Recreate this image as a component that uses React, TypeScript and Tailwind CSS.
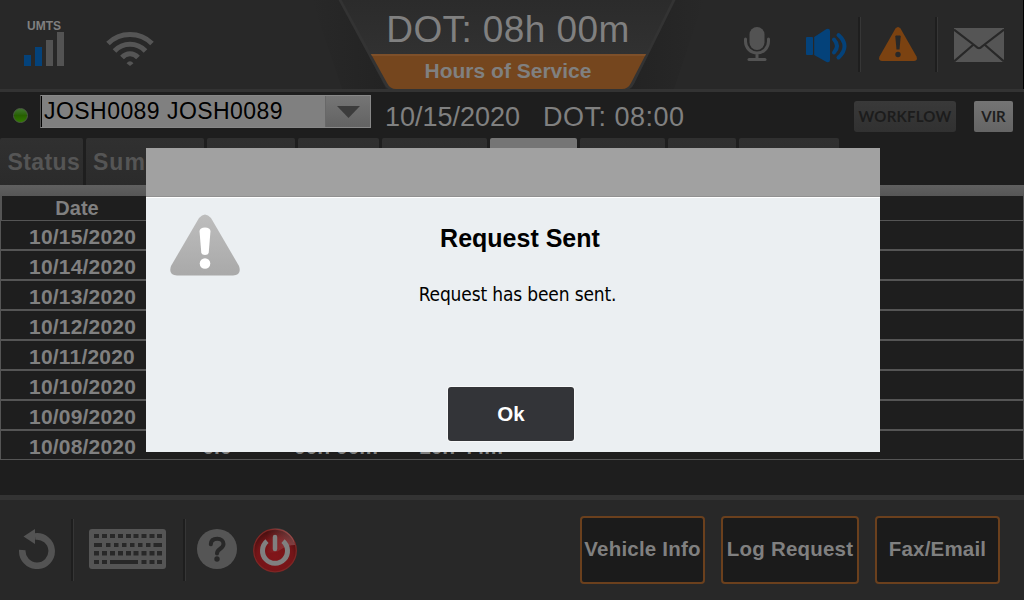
import React from "react";

const dates = [
  "10/15/2020",
  "10/14/2020",
  "10/13/2020",
  "10/12/2020",
  "10/11/2020",
  "10/10/2020",
  "10/09/2020",
  "10/08/2020",
];

function Separator({ className }: { className: string }) {
  return <div className={`w-[3px] shrink-0 border-l-2 border-l-[#1e1e1e] border-r border-r-[#363636] ${className}`} />;
}

function Signal() {
  return (
    <div className="ml-6 mt-[19px] flex h-[48px] w-10 flex-col">
      <span className="-mx-2 text-center text-[12px] font-bold leading-[14px] text-[#808080]">UMTS</span>
      <div className="-mt-px flex h-[34px] items-end gap-1">
        <div className="h-[11px] w-[7px] bg-[#04427a]" />
        <div className="h-[19px] w-[7px] bg-[#04427a]" />
        <div className="h-[26px] w-[7px] bg-[#535353]" />
        <div className="h-[34px] w-[7px] bg-[#535353]" />
      </div>
    </div>
  );
}

function Wifi() {
  return (
    <svg className="ml-[42px] mt-[31px]" width="48" height="36" viewBox="0 0 48 36" fill="none" stroke="#555" strokeWidth="5">
      <path d="M2 12.5C14 .5 34 .5 46 12.5" />
      <path d="M8.5 20C17 11 31 11 39.5 20" />
      <path d="M16 26.5C20.5 21.5 27.5 21.5 32 26.5" />
      <path d="M20.5 32.2Q24 28.5 27.5 32.2L24 35Z" fill="#555" stroke="none" />
    </svg>
  );
}

function Mic() {
  return (
    <svg className="ml-auto mt-[27px]" width="26" height="35" viewBox="0 0 26 35" fill="none" stroke="#535353">
      <rect x="5.5" y="0" width="15" height="23" rx="7.5" fill="#535353" stroke="none" />
      <path d="M1.5 12v2.5a11.5 11.5 0 0 0 23 0V12M13 26v6" strokeWidth="3" strokeLinecap="round" />
      <path d="M5 32.5h16" strokeWidth="3" strokeLinecap="round" />
    </svg>
  );
}

function Speaker() {
  return (
    <svg className="ml-9 mt-[28px]" width="42" height="36" viewBox="0 0 42 36">
      <rect y="9" width="7" height="18" rx="1" fill="#04427a" />
      <path d="M8.2 9L20.5 1Q24 0 24 3v29q0 3-3.500 2L8.200 27z" fill="#04427a" />
      <g fill="none" stroke="#04427a" strokeWidth="4" strokeLinecap="round">
        <path d="M28 11.500Q34 18 28 24.500" />
        <path d="M32.500 7Q44.500 18 32.500 29.500" />
      </g>
    </svg>
  );
}

function Alert() {
  return (
    <svg className="ml-[18px] mt-[27px]" width="38" height="34" viewBox="0 0 38 34">
      <path d="M16.500 1.500Q19-1.500 21.500 1.500L37.500 29.500Q39 34 35 34H3Q-1 34 .5 29.500Z" fill="#7b4211" />
      <path d="M16.300 9.500q0-1 1-1h3.400q1 0 1 1L20.500 22.500h-3z" fill="#282828" />
      <circle cx="19" cy="27.500" r="2.700" fill="#282828" />
    </svg>
  );
}

function Mail() {
  return (
    <svg className="ml-[16px] mr-[19px] mt-[28px]" width="50" height="34" viewBox="0 0 50 34">
      <rect width="50" height="34" fill="#555" />
      <path d="M0 1.500L22 18.500Q25 22 28 18.500L50 1.500M0 33.500L19 17M50 33.500L31 17" fill="none" stroke="#282828" strokeWidth="2.200" />
    </svg>
  );
}

function Header() {
  return (
    <header className="relative h-[92px] border-b-[3px] border-[#333] bg-[#282828]">
      <div className="flex h-[89px] items-start border-r border-black">
        <Signal />
        <Wifi />
        <Mic />
        <Speaker />
        <Separator className="ml-[10px] mt-[17px] h-[55px]" />
        <Alert />
        <Separator className="ml-[18px] mt-[17px] h-[55px]" />
        <Mail />
      </div>
      <div className="absolute left-[312px] top-0 h-[92px] w-[392px]">
        <svg className="absolute inset-0" width="392" height="92" viewBox="0 0 392 92">
          <defs>
            <linearGradient id="hos" x1="0" y1="0" x2="0" y2="1">
              <stop offset="0" stopColor="#2b2b2b" />
              <stop offset="1" stopColor="#313131" />
            </linearGradient>
            <linearGradient id="shadeL">
              <stop offset="0" stopColor="#282828" />
              <stop offset="1" stopColor="#232323" />
            </linearGradient>
            <linearGradient id="shadeR">
              <stop offset="0" stopColor="#232323" />
              <stop offset="1" stopColor="#282828" />
            </linearGradient>
          </defs>
          <path d="M0 0H28L74 89H30z" fill="url(#shadeL)" />
          <path d="M392 0H362L317 89H362z" fill="url(#shadeR)" />
          <path d="M26.500 0L72 84Q75 90 81 90H313Q319 90 322 84L363.500 0z" fill="#333" />
          <path d="M29.500 0L59 54H334L360.500 0z" fill="url(#hos)" />
          <path d="M59 54L75 83Q78 89 84 89H310Q316 89 319 83L334 54z" fill="#75461e" />
          <path d="M59 54H334L333 56H60z" fill="#7e502a" />
        </svg>
        <div className="relative flex flex-col items-center text-[#808080]">
          <div className="h-[54px] pt-[9px] text-[37px] leading-[42px] tracking-[0.4px]">DOT: 08h 00m</div>
          <div className="text-[21px] font-bold leading-[34px]">Hours of Service</div>
        </div>
      </div>
    </header>
  );
}

function DriverBar() {
  return (
    <div className="flex h-[46px] items-start bg-[#1e1e1e]">
      <div className="ml-[13px] mt-4 h-[15px] w-[15px] rounded-full border border-[#4c5c43] bg-linear-to-b from-[#3f752b] via-[#276000] to-[#317900]" />
      <div className="ml-3 mt-[3px] flex h-[33px] w-[331px] border border-[#888] border-l-[#555] bg-[#808080]">
        <span className="w-[284px] border-l border-black pl-[2px] text-[23px] leading-[30px] tracking-[0.45px] text-black">JOSH0089 JOSH0089</span>
        <div className="flex w-[45px] items-center justify-center border-l border-[#686868] bg-linear-to-b from-[#757575] to-[#636363]">
          <svg width="23" height="12" viewBox="0 0 23 12">
            <path d="M0 0H23L11.500 12z" fill="#3c3c3c" />
          </svg>
        </div>
      </div>
      <span className="ml-[14px] mt-[9px] w-[135px] text-[27px] leading-[32px] text-[#808080]">10/15/2020</span>
      <span className="ml-[23px] mt-[9px] text-[27px] leading-[32px] tracking-[0.5px] text-[#808080]">DOT: 08:00</span>
      <div className="ml-auto mt-[9px] flex h-[31px] w-[102px] items-center justify-center rounded-[3px] bg-linear-to-b from-[#393939] to-[#313131] font-[Lato] text-[15px] font-bold tracking-[0.2px] text-[#1c1c1c]">
        WORKFLOW
      </div>
      <div className="ml-[18px] mr-[11px] mt-[9px] flex h-[31px] w-[39px] items-center justify-center rounded-[2px] bg-linear-to-b from-[#747474] to-[#656565] font-[Lato] text-[15px] font-bold text-[#1e1e1e]">
        VIR
      </div>
    </div>
  );
}

function Tabs() {
  const tab = "h-full shrink-0 overflow-hidden rounded-t-[2px] bg-linear-to-b from-[#303030] to-[#2b2b2b]";
  return (
    <nav className="flex h-[47px] gap-[3px] bg-[#1e1e1e] text-[23px] font-bold leading-[49px] tracking-[0.4px] text-[#555]">
      <div className={`${tab} w-[83px] pl-[7.5px]`}>Status</div>
      <div className={`${tab} w-[118px] pl-[7px] tracking-[1px]`}>Summary</div>
      <div className={`${tab} w-[88px]`} />
      <div className={`${tab} w-[81px]`} />
      <div className={`${tab} w-[105px]`} />
      <div className="h-full w-[87px] shrink-0 rounded-t-[2px] bg-[#757575]" />
      <div className={`${tab} w-[85px]`} />
      <div className={`${tab} w-[68px]`} />
      <div className={`${tab} w-[100px]`} />
    </nav>
  );
}

function LogTable() {
  return (
    <div className="h-[264px] border-r border-[#555] text-[21px] font-bold leading-[28px] text-[#808080]">
      <div className="h-[25px] border-b border-l-2 border-[#555]">
        <div className="w-[150px] text-center text-[20px] leading-[25px]">Date</div>
      </div>
      {dates.map((date, i) => (
        <div key={date} className={`flex border-l border-b border-[#555] ${i === 0 ? "h-[29px]" : "h-[30px] border-t"}`}>
          <span className="w-[174px] shrink-0 pl-[28px] pt-[2px] tracking-[0.2px]">{date}</span>
          {i === 7 && (
            <>
              <span className="ml-[2px] w-[80px] pt-[2px] text-center">0.0</span>
              <span className="w-[158px] pt-[2px] text-center">00h 00m</span>
              <span className="w-[92px] pt-[2px] text-center">10h 44m</span>
            </>
          )}
        </div>
      ))}
    </div>
  );
}

function Undo() {
  return (
    <svg className="ml-[18px] mt-[29px]" width="38" height="40" viewBox="0 0 38 40">
      <path d="M4.300 21A14.700 14.700 0 1 0 17 7.500" fill="none" stroke="#535353" strokeWidth="6.600" />
      <path d="M5.500 7.500L17 0V15z" fill="#535353" />
    </svg>
  );
}

function Keyboard() {
  const cells = [5, 13, 21, 29, 37, 44.5, 52.5, 60.5, 68];
  return (
    <svg className="ml-[15px] mt-[29px]" width="77" height="40" viewBox="0 0 77 40">
      <rect width="77" height="40" rx="3" fill="#555" />
      <g fill="#282828">
        {cells.map((x) => (
          <rect key={`a${x}`} x={x} y="5" width="5" height="4" />
        ))}
        {[17, 25, 33, 41, 49, 57].map((x) => (
          <rect key={x} x={x} y="14" width="4.500" height="4" />
        ))}
        <rect x="5" y="14" width="8" height="4" />
        <rect x="64.500" y="14" width="8.500" height="4" />
        {cells.map((x) => (
          <rect key={`c${x}`} x={x} y="22" width="5" height="4.500" />
        ))}
        {[5, 13, 52.5, 60.5, 68].map((x) => (
          <rect key={`d${x}`} x={x} y="31" width="5" height="4" />
        ))}
        <rect x="21" y="31" width="28" height="4" />
      </g>
    </svg>
  );
}

function Help() {
  return (
    <svg className="ml-[11px] mt-[29px]" width="40" height="40" viewBox="0 0 40 40">
      <circle cx="20" cy="20" r="20" fill="#555" />
      <path d="M13.800 15.300C14 11 17 9.800 20.200 9.800C24 9.800 26.500 12 26.500 15C26.500 20 20 19.500 20 24.500" fill="none" stroke="#282828" strokeWidth="4" strokeLinecap="round" />
      <circle cx="20" cy="30" r="2.700" fill="#282828" />
    </svg>
  );
}

function Power() {
  return (
    <svg className="ml-4 mt-[28px]" width="44" height="45" viewBox="0 0 44 45">
      <defs>
        <radialGradient id="red" cx=".5" cy=".65" r=".6">
          <stop offset="0" stopColor="#821519" />
          <stop offset=".7" stopColor="#741518" />
          <stop offset="1" stopColor="#4d1011" />
        </radialGradient>
        <linearGradient id="gloss" x1="0" y1="0" x2="1" y2="0">
          <stop offset=".3" stopColor="#fff" stopOpacity="0" />
          <stop offset="1" stopColor="#fff" stopOpacity=".2" />
        </linearGradient>
      </defs>
      <circle cx="22" cy="22.500" r="21.300" fill="url(#red)" stroke="#7e2725" strokeWidth="1.300" />
      <path d="M2 23A20 20 0 0 1 42 17Q34 17 27 22T2 23z" fill="url(#gloss)" />
      <path d="M14 13.200A12.500 12.500 0 1 0 30 13.200" fill="none" stroke="#808080" strokeWidth="5" />
      <path d="M22 9V21" stroke="#808080" strokeWidth="4.500" strokeLinecap="round" />
    </svg>
  );
}

function Footer() {
  const button = "mt-4 flex h-[68px] items-center justify-center whitespace-nowrap rounded-[4px] border-2 border-[#6b401d] bg-[#1b1b1b] pb-[2px]";
  return (
    <footer className="flex h-[105px] items-start border-t-[5px] border-[#333] bg-[#282828]">
      <Undo />
      <Separator className="ml-[15px] mt-[19px] h-[62px]" />
      <Keyboard />
      <Separator className="ml-[17px] mt-[19px] h-[62px]" />
      <Help />
      <Power />
      <div className="ml-auto mr-[24px] flex text-[20.5px] font-bold tracking-[0.2px] text-[#808080]">
        <div className={`${button} mr-4 w-[125px]`}>Vehicle Info</div>
        <div className={`${button} mr-4 w-[138px]`}>Log Request</div>
        <div className={`${button} w-[125px]`}>Fax/Email</div>
      </div>
    </footer>
  );
}

function Dialog() {
  return (
    <div role="dialog" className="absolute left-[146px] top-[148px] flex h-[304px] w-[734px] flex-col bg-[#ebeff2] text-black">
      <div className="h-[49px] shrink-0 border-b border-[#919191] bg-[#a1a1a1]" />
      <div className="flex h-[255px] border-t border-white">
        <svg className="ml-6 mt-4 shrink-0" width="70" height="62" viewBox="0 0 70 62">
          <defs>
            <linearGradient id="warn" x1="0" y1="0" x2="0" y2="1">
              <stop offset="0" stopColor="#bdbdbd" />
              <stop offset="1" stopColor="#a9a9a9" />
            </linearGradient>
          </defs>
          <path d="M29 4Q35-3 41 4L69 52Q72 61 63 61.500H7Q-2 61 1 52z" fill="url(#warn)" />
          <path d="M29.500 17Q30 13.500 35 13.500T40.500 17L38.700 39Q38 41 35 41T31.300 39z" fill="#fff" />
          <circle cx="35" cy="49.500" r="5.300" fill="#fff" />
        </svg>
        <div className="ml-[-94px] flex w-[734px] shrink-0 flex-col items-center">
          <h1 className="ml-[14px] mt-[25px] text-[25px] font-bold leading-[30px]">Request Sent</h1>
          <p className="ml-[9px] mt-[28px] font-['DejaVu_Sans_Condensed'] text-[19px] leading-[26px] tracking-[-0.15px]">Request has been sent.</p>
          <button className="ml-[-4px] mt-[80px] h-[54px] w-[126px] rounded-[3px] bg-[#333438] text-[20.5px] font-bold text-white shadow-[0_0_0_1px_#f7f8f9]">Ok</button>
        </div>
      </div>
    </div>
  );
}

export default function App() {
  return (
    <div className="relative h-[600px] w-[1024px] overflow-hidden bg-[#1e1e1e] font-['Liberation_Sans',sans-serif]">
      <Header />
      <DriverBar />
      <Tabs />
      <div className="h-[11px] bg-linear-to-b from-[#606060] to-[#565656]" />
      <LogTable />
      <div className="h-[35px]" />
      <Footer />
      <Dialog />
    </div>
  );
}
